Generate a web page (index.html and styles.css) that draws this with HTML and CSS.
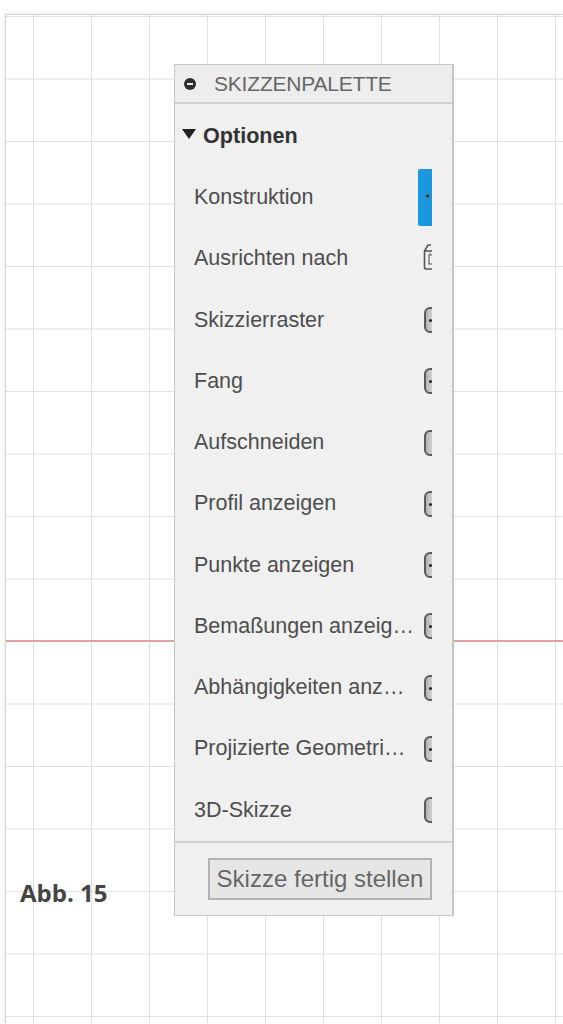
FILE: index.html
```html
<!DOCTYPE html>
<html lang="de">
<head>
<meta charset="utf-8">
<title>Skizzenpalette</title>
<link rel="stylesheet" href="styles.css">
</head>
<body>
<div class="canvas">
  <div class="axis"></div>
  <div class="palette">
    <div class="pal-head">
      <span class="collapse-icon"></span>
      <span class="pal-title">SKIZZENPALETTE</span>
    </div>
    <div class="pal-body">
      <div class="clip">
        <div class="section-title"><span class="tri"></span>Optionen</div>
        <div class="row"><span class="label">Konstruktion</span><span class="active-btn"><span class="arrow"></span></span></div>
        <div class="row"><span class="label">Ausrichten nach</span>
          <svg class="align-icon" width="12" height="28" viewBox="0 0 12 28"><path d="M1.5 9 L1.5 25.5 Q1.5 27 3 27 L12 27 M1.5 9 L5 3 L8 3 M1.5 9 L12 9" fill="none" stroke="#555" stroke-width="1.6"/><rect x="6" y="13" width="6" height="9" fill="none" stroke="#666" stroke-width="1.2"/><rect x="6.5" y="11" width="1.2" height="1.2" fill="#666"/></svg>
        </div>
        <div class="row"><span class="label">Skizzierraster</span><span class="toggle dot"></span></div>
        <div class="row"><span class="label">Fang</span><span class="toggle dot"></span></div>
        <div class="row"><span class="label">Aufschneiden</span><span class="toggle"></span></div>
        <div class="row"><span class="label">Profil anzeigen</span><span class="toggle dot"></span></div>
        <div class="row"><span class="label">Punkte anzeigen</span><span class="toggle dot"></span></div>
        <div class="row"><span class="label">Bemaßungen anzeigen</span><span class="toggle dot"></span></div>
        <div class="row"><span class="label">Abhängigkeiten anzeigen</span><span class="toggle dot"></span></div>
        <div class="row"><span class="label">Projizierte Geometrien anzeigen</span><span class="toggle dot"></span></div>
        <div class="row"><span class="label">3D-Skizze</span><span class="toggle"></span></div>
      </div>
      <div class="gutter"></div>
    </div>
    <div class="pal-foot">
      <button class="finish">Skizze fertig stellen</button>
    </div>
  </div>
  <div class="caption">Abb. 15</div>
</div>
</body>
</html>
```

FILE: styles.css
```css
html, body {
  margin: 0;
  padding: 0;
  background: #ffffff;
  overflow: hidden;
}

body {
  height: 1024px;
  font-family: "Liberation Sans", Arial, sans-serif;
}

.canvas {
  position: relative;
  margin: 14px 0 0 5px;
  height: 1010px;
  border-top: 1px solid #d6d6d6;
  border-left: 1px solid #d6d6d6;
  box-shadow: -1px -1px 3px rgba(0, 0, 0, 0.08);
  background-color: #ffffff;
  background-image:
    linear-gradient(to right, #e0e0e0 1px, transparent 1px),
    linear-gradient(to bottom, #e0e0e0 1px, transparent 1px);
  background-size: 58px 62.5px;
  background-position: 27px 1px;
  overflow: hidden;
  padding-top: 49px;
  padding-left: 168px;
  box-sizing: border-box;
}

.axis {
  position: absolute;
  left: 0;
  right: 0;
  top: 625px;
  height: 2px;
  background: #e2a0a0;
}

.palette {
  position: relative;
  width: 280px;
  box-sizing: border-box;
  background: #f0f0f0;
  border: 1px solid #c6c6c6;
  border-right: 2px solid #c6c6c6;
}

.pal-head {
  height: 37px;
  display: flex;
  align-items: center;
  background: #ededed;
  border-bottom: 2px solid #d2d2d2;
  padding-left: 9px;
}

.collapse-icon {
  position: relative;
  width: 12px;
  height: 12px;
  border-radius: 50%;
  background: #2e2e2e;
  margin-right: 18px;
}

.collapse-icon::after {
  content: "";
  position: absolute;
  left: 3px;
  right: 3px;
  top: 5px;
  height: 2px;
  background: #f0f0f0;
}

.pal-title {
  font-size: 21px;
  letter-spacing: -0.2px;
  color: #666666;
}

.pal-body {
  display: flex;
}

.clip {
  width: 257px;
  overflow: hidden;
}

.gutter {
  width: 20px;
}

.section-title {
  height: 63px;
  display: flex;
  align-items: center;
  padding-left: 7px;
  font-size: 21.6px;
  font-weight: bold;
  color: #333333;
}

.tri {
  width: 0;
  height: 0;
  border-left: 7px solid transparent;
  border-right: 7px solid transparent;
  border-top: 10px solid #222222;
  margin-right: 7px;
  margin-bottom: 4px;
}

.row {
  height: 61.25px;
  display: flex;
  align-items: center;
  padding-left: 19px;
  white-space: nowrap;
}

.label {
  width: 221.4px;
  flex: none;
  overflow: hidden;
  text-overflow: ellipsis;
  white-space: nowrap;
  font-size: 21.5px;
  color: #4e4e4e;
}

.toggle {
  position: relative;
  flex: none;
  margin-left: 8.6px;
  width: 22px;
  height: 26px;
  box-sizing: border-box;
  border: 2px solid #5a5a5a;
  border-radius: 6px;
  background: linear-gradient(to right, #b4b4b4, #f2f2f2 70%);
}

.toggle.dot::after {
  content: "";
  position: absolute;
  left: 3px;
  top: 10px;
  width: 3px;
  height: 3px;
  border-radius: 50%;
  background: #222222;
}

.active-btn {
  position: relative;
  flex: none;
  margin-left: 2.6px;
  width: 30px;
  height: 57px;
  background: #1a97dd;
  border-radius: 2px;
}

.arrow {
  position: absolute;
  left: 7px;
  top: 25px;
  width: 0;
  height: 0;
  border-top: 2px solid transparent;
  border-bottom: 2px solid transparent;
  border-right: 4px solid #3a2a10;
}

.align-icon {
  flex: none;
  margin-left: 7.6px;
  margin-top: -5px;
}

.pal-foot {
  border-top: 2px solid #d2d2d2;
  padding: 15px 0 15px 33px;
}

.finish {
  display: block;
  width: 224px;
  height: 42px;
  box-sizing: border-box;
  margin: 0;
  padding: 0;
  background: #e6e6e6;
  border: 2px solid #b2b2b2;
  border-radius: 0;
  font-family: "Liberation Sans", Arial, sans-serif;
  font-size: 24px;
  color: #666666;
  text-align: center;
}

.caption {
  position: absolute;
  left: 14px;
  top: 866px;
  font-family: "Open Sans", "Liberation Sans", sans-serif;
  font-weight: bold;
  font-size: 24px;
  line-height: 24px;
  color: #444444;
}
```
